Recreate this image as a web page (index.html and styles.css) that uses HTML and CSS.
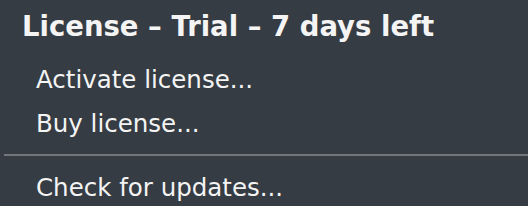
FILE: index.html
```html
<!DOCTYPE html>
<html lang="en">
<head>
    <meta charset="UTF-8">
    <title>License menu</title>
    <link rel="stylesheet" href="styles.css">
</head>
<body>
    <div class="menu">
        <div class="menu-title">License – Trial – 7 days left</div>
        <div class="menu-item">Activate license...</div>
        <div class="menu-item">Buy license...</div>
        <div class="menu-divider"></div>
        <div class="menu-item">Check for updates...</div>
    </div>
</body>
</html>
```

FILE: styles.css
```css
body {
    margin: 0;
    padding: 0;
    background-color: #363c43;
    font-family: "DejaVu Sans", Verdana, sans-serif;
    color: #f4f4f4;
}
.menu {
    width: 528px;
    height: 206px;
    overflow: hidden;
}
.menu-title {
    font-size: 27.5px;
    font-weight: bold;
    line-height: 40px;
    padding: 6px 0 0 22px;
    margin-bottom: 12px;
    white-space: nowrap;
}
.menu-item {
    font-size: 24.5px;
    line-height: 44px;
    padding-left: 36px;
    white-space: nowrap;
}
.menu-divider {
    height: 2px;
    margin: 8px 0 10px 4px;
    background-color: #70767b;
}
```
